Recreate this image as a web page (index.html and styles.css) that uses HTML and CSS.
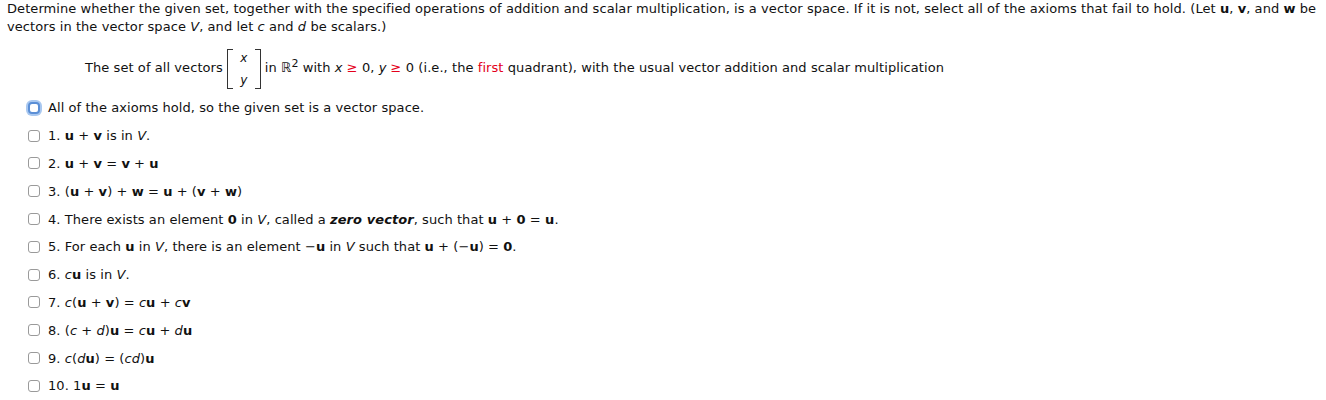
FILE: index.html
```html
<!DOCTYPE html>
<html>
<head>
<meta charset="utf-8">
<link rel="stylesheet" href="styles.css">
</head>
<body>
<div class="question">
  <p class="intro">
    <span class="line">Determine whether the given set, together with the specified operations of addition and scalar multiplication, is a vector space. If it is not, select all of the axioms that fail to hold. (Let <b>u</b>, <b>v</b>, and <b>w</b> be</span>
    <span class="line">vectors in the vector space <i>V</i>, and let <i>c</i> and <i>d</i> be scalars.)</span>
  </p>
  <div class="prompt">
    <span>The set of all vectors</span>
    <span class="matrix"><span class="br left"></span><span class="cells"><i>x</i><i>y</i></span><span class="br right"></span></span>
    <span>in ℝ<sup>2</sup> with <i>x</i> <span class="red">≥</span> 0, <i>y</i> <span class="red">≥</span> 0 (i.e., the <span class="red">first</span> quadrant), with the usual vector addition and scalar multiplication</span>
  </div>
  <ul class="options">
    <li><span class="box focus"></span><span>All of the axioms hold, so the given set is a vector space.</span></li>
    <li><span class="box"></span><span>1. <b>u</b> + <b>v</b> is in <i>V</i>.</span></li>
    <li><span class="box"></span><span>2. <b>u</b> + <b>v</b> = <b>v</b> + <b>u</b></span></li>
    <li><span class="box"></span><span>3. (<b>u</b> + <b>v</b>) + <b>w</b> = <b>u</b> + (<b>v</b> + <b>w</b>)</span></li>
    <li><span class="box"></span><span>4. There exists an element <b>0</b> in <i>V</i>, called a <b><i>zero vector</i></b>, such that <b>u</b> + <b>0</b> = <b>u</b>.</span></li>
    <li><span class="box"></span><span>5. For each <b>u</b> in <i>V</i>, there is an element −<b>u</b> in <i>V</i> such that <b>u</b> + (−<b>u</b>) = <b>0</b>.</span></li>
    <li><span class="box"></span><span>6. <i>c</i><b>u</b> is in <i>V</i>.</span></li>
    <li><span class="box"></span><span>7. <i>c</i>(<b>u</b> + <b>v</b>) = <i>c</i><b>u</b> + <i>c</i><b>v</b></span></li>
    <li><span class="box"></span><span>8. (<i>c</i> + <i>d</i>)<b>u</b> = <i>c</i><b>u</b> + <i>d</i><b>u</b></span></li>
    <li><span class="box"></span><span>9. <i>c</i>(<i>d</i><b>u</b>) = (<i>c</i><i>d</i>)<b>u</b></span></li>
    <li><span class="box"></span><span>10. 1<b>u</b> = <b>u</b></span></li>
  </ul>
</div>
</body>
</html>
```

FILE: styles.css
```css
html, body {
  margin: 0;
  padding: 0;
  background: #fff;
}
body {
  font-family: "DejaVu Sans", Verdana, sans-serif;
  font-size: 13px;
  letter-spacing: 0.07px;
  color: #111;
}
.question {
  padding: 0 7px;
}
.intro {
  margin: 0;
  line-height: 18px;
}
.intro .line {
  display: block;
  white-space: nowrap;
}
.prompt {
  display: flex;
  align-items: center;
  gap: 4px;
  padding-left: 78px;
  margin-top: 9px;
  height: 44px;
}
.prompt sup {
  font-size: 11px;
  line-height: 0;
  vertical-align: 5px;
}
.red {
  color: #e4001b;
}
.matrix {
  display: flex;
  align-items: stretch;
  height: 40px;
  margin-top: 4px;
}
.br {
  width: 5px;
  border: 1px solid #333;
}
.br.left {
  border-right: none;
}
.br.right {
  border-left: none;
}
.cells {
  display: flex;
  flex-direction: column;
  justify-content: space-between;
  align-items: center;
  width: 22px;
  font-size: 12px;
  line-height: 18px;
}
.options {
  list-style: none;
  margin: 5px 0 0;
  padding: 0 0 0 21px;
}
.options li {
  display: flex;
  align-items: center;
  gap: 8px;
  height: 27.8px;
}
.box {
  width: 10px;
  height: 10px;
  border: 1px solid #9a9a9a;
  border-radius: 3px;
  background: #fff;
  flex: none;
}
.box.focus {
  border: 2px solid #5b8fd6;
  width: 8px;
  height: 8px;
  box-shadow: 0 0 0 2px #a9c8f0;
  border-radius: 4px;
}
```
